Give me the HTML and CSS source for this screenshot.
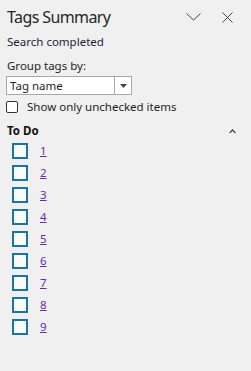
FILE: index.html
```html
<!DOCTYPE html>
<html>
<head>
<meta charset="utf-8">
<link rel="stylesheet" href="styles.css">
</head>
<body>
<div class="pane">
  <div class="header">
    <div class="title">Tags Summary</div>
    <div class="actions">
      <svg class="icon" width="15" height="8" viewBox="0 0 15 8"><path d="M0.5 0.5 L7.5 7 L14.5 0.5" fill="none" stroke="#444" stroke-width="1"/></svg>
      <svg class="icon close" width="11" height="11" viewBox="0 0 11 11"><path d="M0.5 0.5 L10.5 10.5 M10.5 0.5 L0.5 10.5" fill="none" stroke="#444" stroke-width="1"/></svg>
    </div>
  </div>
  <div class="status">Search completed</div>
  <div class="label">Group tags by:</div>
  <div class="select">
    <span class="select-text">Tag name</span>
    <span class="select-btn"><svg width="7" height="4" viewBox="0 0 7 4"><path d="M0 0 H7 L3.5 4 Z" fill="#444"/></svg></span>
  </div>
  <label class="check-row">
    <span class="small-box"></span>
    <span>Show only unchecked items</span>
  </label>
  <div class="group-head">
    <span class="group-title">To Do</span>
    <svg width="7" height="4" viewBox="0 0 7 4"><path d="M0 4 L3.5 0 L7 4 L5.5 4 L3.5 1.8 L1.5 4 Z" fill="#333"/></svg>
  </div>
  <ul class="items">
    <li class="item"><span class="box"></span><a class="link" href="#">1</a></li>
    <li class="item"><span class="box"></span><a class="link" href="#">2</a></li>
    <li class="item"><span class="box"></span><a class="link" href="#">3</a></li>
    <li class="item"><span class="box"></span><a class="link" href="#">4</a></li>
    <li class="item"><span class="box"></span><a class="link" href="#">5</a></li>
    <li class="item"><span class="box"></span><a class="link" href="#">6</a></li>
    <li class="item"><span class="box"></span><a class="link" href="#">7</a></li>
    <li class="item"><span class="box"></span><a class="link" href="#">8</a></li>
    <li class="item"><span class="box"></span><a class="link" href="#">9</a></li>
  </ul>
</div>
</body>
</html>
```
FILE: styles.css
```css
html, body {
  margin: 0;
  padding: 0;
  background: #f0f0f0;
}
body {
  font-family: "Noto Sans", "Open Sans", sans-serif;
  font-size: 11.5px;
  color: #1e1e1e;
}
.pane {
  display: flex;
  flex-direction: column;
  padding: 0 0 0 6px;
}
.header {
  display: flex;
  align-items: center;
  justify-content: space-between;
  height: 34px;
  padding-right: 18px;
}
.title {
  font-size: 16px;
  color: #262626;
  padding-left: 1px;
  letter-spacing: -0.6px;
}
.actions {
  display: flex;
  align-items: center;
  gap: 21px;
}
.icon { display: block; }
.status {
  padding-left: 1px;
  line-height: 16px;
  color: #1e1e3c;
}
.label {
  margin-top: 8px;
  padding-left: 1px;
  line-height: 16px;
}
.select {
  margin-top: 2px;
  width: 124px;
  height: 17px;
  border: 1px solid #a8a8a8;
  background: #fff;
  display: flex;
  align-items: center;
}
.select-text {
  flex: 1;
  padding-left: 3px;
  line-height: 17px;
}
.select-btn {
  width: 16px;
  height: 17px;
  border-left: 1px solid #a8a8a8;
  display: flex;
  align-items: center;
  justify-content: center;
}
.check-row {
  margin-top: 5px;
  display: flex;
  align-items: center;
  gap: 9px;
  line-height: 14px;
}
.small-box {
  width: 10px;
  height: 10px;
  border: 1px solid #333;
  border-radius: 2px;
  background: #fff;
}
.group-head {
  margin-top: 10px;
  display: flex;
  align-items: center;
  justify-content: space-between;
  padding-right: 15px;
  line-height: 14px;
}
.group-title {
  font-weight: bold;
  padding-left: 1px;
  color: #111;
}
.items {
  list-style: none;
  margin: 5px 0 0 0;
  padding: 0 0 0 6px;
  display: flex;
  flex-direction: column;
  gap: 6px;
}
.item {
  display: flex;
  align-items: center;
  gap: 12px;
  height: 16px;
}
.box {
  box-sizing: border-box;
  width: 16px;
  height: 16px;
  border: 2px solid #1a73a0;
  background: #fafafa;
}
.link {
  color: #6a2aa8;
  text-decoration: underline;
  line-height: 16px;
}
```
